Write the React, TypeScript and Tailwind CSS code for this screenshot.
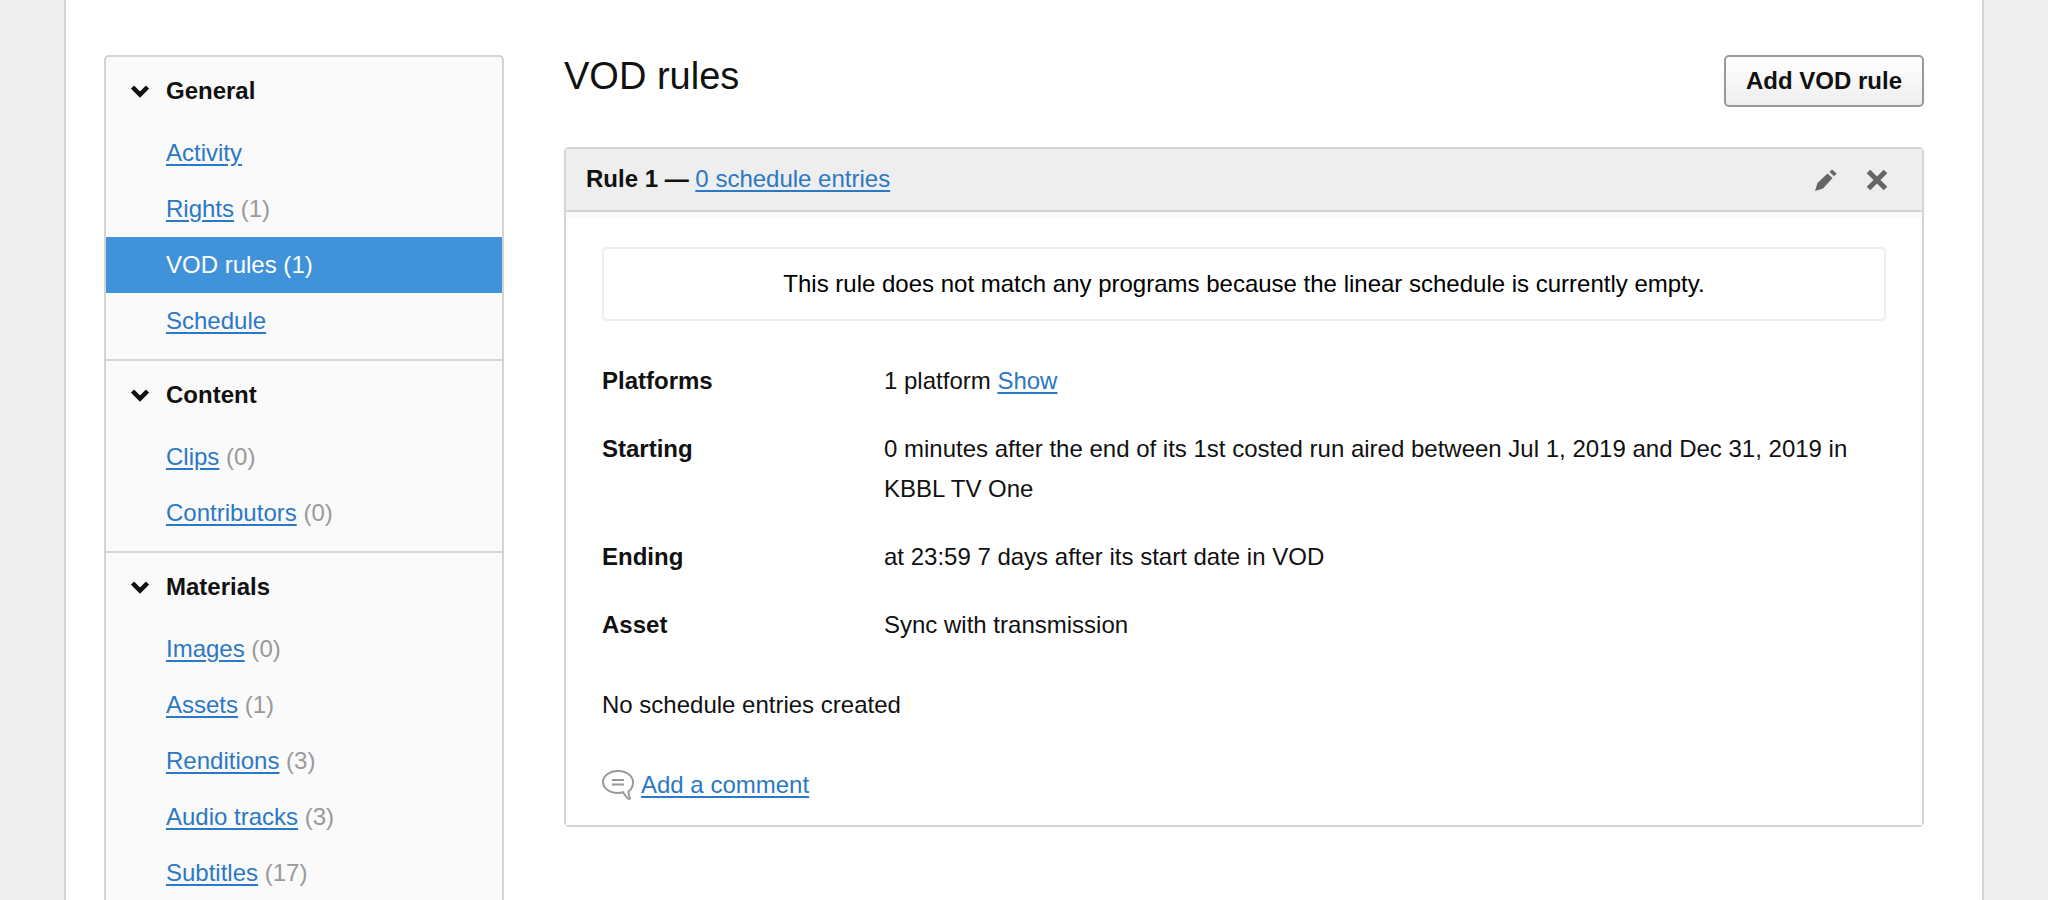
const sections = [
  {
    title: "General",
    items: [
      { label: "Activity" },
      { label: "Rights", count: 1 },
      { label: "VOD rules", count: 1, active: true },
      { label: "Schedule" },
    ],
  },
  {
    title: "Content",
    items: [
      { label: "Clips", count: 0 },
      { label: "Contributors", count: 0 },
    ],
  },
  {
    title: "Materials",
    items: [
      { label: "Images", count: 0 },
      { label: "Assets", count: 1 },
      { label: "Renditions", count: 3 },
      { label: "Audio tracks", count: 3 },
      { label: "Subtitles", count: 17 },
    ],
  },
];

const linkClass = "text-[#2b78c4] underline underline-offset-[3px]";

function Chevron() {
  return (
    <svg width="18" height="14" viewBox="0 0 18 14" className="text-[#111]">
      <path d="M1.5 3 L9 10.5 L16.5 3" fill="none" stroke="currentColor" strokeWidth="4.5" />
    </svg>
  );
}

function PencilIcon() {
  return (
    <svg width="22" height="22" viewBox="0 0 22 22" className="text-[#666]">
      <path d="M0 22 L2.5 14 L12.5 4.5 L17.5 9 L8 19.5 Z" fill="currentColor" />
      <path d="M14.5 3 L17 0.5 L21.7 4.5 L19 7.2 Z" fill="currentColor" />
    </svg>
  );
}

function CloseIcon() {
  return (
    <svg width="22" height="22" viewBox="0 0 22 22" className="text-[#666]">
      <path d="M2.5 2.5 L19.5 19.5 M19.5 2.5 L2.5 19.5" fill="none" stroke="currentColor" strokeWidth="5" />
    </svg>
  );
}

function CommentIcon() {
  return (
    <svg width="32" height="30" viewBox="0 0 32 30" className="text-[#999]">
      <path
        d="M16 1 C7.5 1 1 6 1 12 C1 18 7.5 23 15.5 23 C17.5 23 19.5 22.8 21 22.3 C22.5 24.5 24 27 26 28.5 C27.5 29.5 28.5 28.5 27.5 27 C27 25.5 26.5 23.5 26.5 21.5 C29.5 19.5 31 16 31 12 C31 6 24.5 1 16 1 Z"
        fill="none"
        stroke="currentColor"
        strokeWidth="2"
      />
      <path d="M10 10 H22 M10 14.5 H22" stroke="currentColor" strokeWidth="2" />
    </svg>
  );
}

function Sidebar() {
  return (
    <aside className="w-[400px] shrink-0 rounded-t-[5px] border-2 border-b-0 border-[#d4d4d4] bg-[#fafafa]">
      {sections.map((section, i) => (
        <div key={section.title} className={i > 0 ? "border-t-2 border-[#d4d4d4] pb-[10px]" : "pb-[10px]"}>
          <div className="mb-[2px] flex h-[66px] items-center pt-[2px]">
            <div className="flex w-[60px] justify-center pl-[8px]">
              <Chevron />
            </div>
            <span className="font-bold text-[#111]">{section.title}</span>
          </div>
          {section.items.map((item) => (
            <div
              key={item.label}
              className={`flex h-[56px] items-center pl-[60px] ${item.active ? "bg-[#4093d9] text-white" : ""}`}
            >
              {item.active ? (
                <span>
                  {item.label} ({item.count})
                </span>
              ) : (
                <span>
                  <a className={linkClass}>{item.label}</a>
                  {item.count !== undefined && <span className="text-[#999]"> ({item.count})</span>}
                </span>
              )}
            </div>
          ))}
        </div>
      ))}
    </aside>
  );
}

function Row({ label, children }: { label: string; children: React.ReactNode }) {
  return (
    <div className="mb-[28px] flex leading-[40px]">
      <div className="w-[282px] shrink-0 font-bold text-[#111]">{label}</div>
      <div>{children}</div>
    </div>
  );
}

export default function App() {
  return (
    <div
      className="h-[900px] overflow-hidden bg-[#eeeeee] text-[24px] text-[#111]"
      style={{ fontFamily: '"Liberation Sans", Arial, sans-serif' }}
    >
      <div className="mx-[64px] flex h-[900px] gap-[60px] border-x-2 border-[#d4d4d4] bg-white pl-[38px] pr-[58px] pt-[55px]">
        <Sidebar />
        <main className="min-w-0 flex-1">
          <div className="mb-[40px] flex items-start justify-between">
            <h1 className="text-[38px] leading-[42px] text-[#111]">VOD rules</h1>
            <button className="h-[52px] w-[200px] rounded-[5px] border-2 border-[#999] bg-gradient-to-b from-white to-[#eeeeee] font-bold text-[#111]">
              Add VOD rule
            </button>
          </div>

          <section className="rounded-[5px] border-2 border-[#d4d4d4]">
            <div className="flex h-[63px] items-center justify-between border-b-2 border-[#d4d4d4] bg-[#eeeeee] pl-[20px] pr-[34px]">
              <div className="pb-[1px]">
                <span className="font-bold text-[#111]">Rule 1 — </span>
                <a className={linkClass}>0 schedule entries</a>
              </div>
              <div className="flex items-center gap-[29px]">
                <PencilIcon />
                <CloseIcon />
              </div>
            </div>

            <div className="bg-gradient-to-b from-[#fafafa] from-[6px] to-white to-[7px] px-[36px] pt-[35px] pb-[20px]">
              <div className="mb-[40px] flex h-[74px] items-center justify-center rounded-[5px] border-2 border-[#eeeeee] text-black">
                This rule does not match any programs because the linear schedule is currently empty.
              </div>
              <Row label="Platforms">
                1 platform <a className={linkClass}>Show</a>
              </Row>
              <Row label="Starting">
                0 minutes after the end of its 1st costed run aired between Jul 1, 2019 and Dec 31, 2019 in KBBL TV One
              </Row>
              <Row label="Ending">at 23:59 7 days after its start date in VOD</Row>
              <Row label="Asset">Sync with transmission</Row>
              <div className="mb-[40px] mt-[40px] leading-[40px]">No schedule entries created</div>
              <div className="flex h-[40px] items-center gap-[7px]">
                <CommentIcon />
                <a className={linkClass}>Add a comment</a>
              </div>
            </div>
          </section>
        </main>
      </div>
    </div>
  );
}
